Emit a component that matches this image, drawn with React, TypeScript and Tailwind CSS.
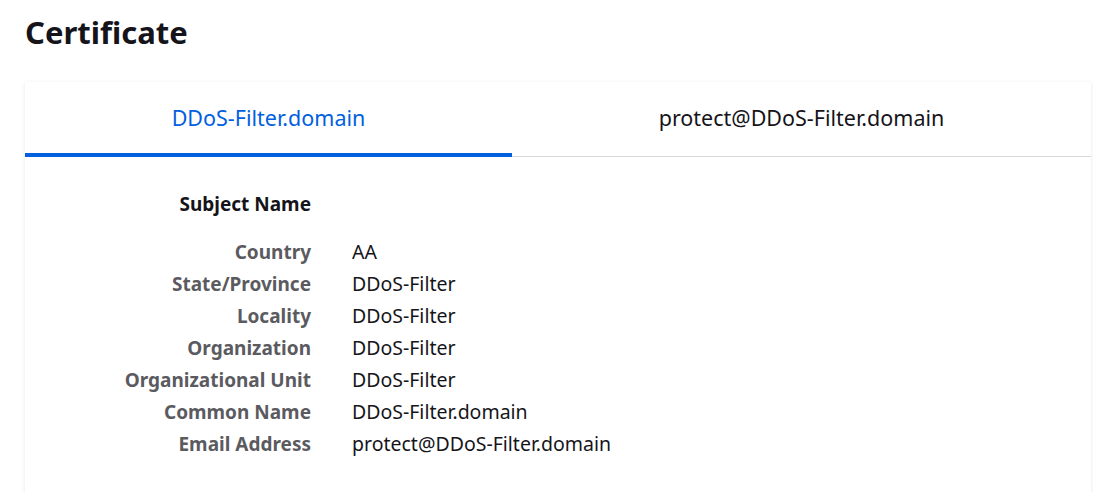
import { useState } from "react";

const rows: [string, string][] = [
  ["Country", "AA"],
  ["State/Province", "DDoS-Filter"],
  ["Locality", "DDoS-Filter"],
  ["Organization", "DDoS-Filter"],
  ["Organizational Unit", "DDoS-Filter"],
  ["Common Name", "DDoS-Filter.domain"],
  ["Email Address", "protect@DDoS-Filter.domain"],
];

const tabs = ["DDoS-Filter.domain", "protect@DDoS-Filter.domain"];

const App = () => {
  const [active, setActive] = useState<number>(0);

  return (
    <div className="min-h-screen bg-white font-['Noto_Sans',sans-serif] text-[#15141a] pl-[25px] pr-[2px] pt-[12px] pb-10">
      <h1 className="text-[31px] font-bold leading-[40px]">Certificate</h1>

      <div className="mt-[30px] bg-white rounded-[2px] shadow-[0_1px_4px_rgba(12,12,13,0.1)]">
        <div className="flex border-b border-[#d7d7db]">
          {tabs.map((t, i) => (
            <button
              key={t}
              onClick={() => setActive(i)}
              className={
                active === i
                  ? "flex-auto h-[75px] pt-[2px] text-[21.5px] text-[#0060df] border-b-4 border-[#0060df] -mb-px"
                  : "flex-auto h-[75px] pt-[2px] text-[21.5px] text-[#15141a] border-b-4 border-transparent -mb-px"
              }
            >
              {t}
            </button>
          ))}
        </div>

        <div className="grid grid-cols-[286px_1fr] gap-x-[41px] pt-[31px] pb-[60px] leading-[32px]">
          <div className="text-right text-[19px] font-bold text-[#15141a] mb-[16px]">Subject Name</div>
          <div />
          {rows.map(([label, value]) => (
            <>
              <div key={label} className="text-right text-[19px] font-bold text-[#5b5b5f]">
                {label}
              </div>
              <div key={label + "-v"} className="text-[19.5px]">
                {value}
              </div>
            </>
          ))}
        </div>
      </div>
    </div>
  );
};

export default App;
